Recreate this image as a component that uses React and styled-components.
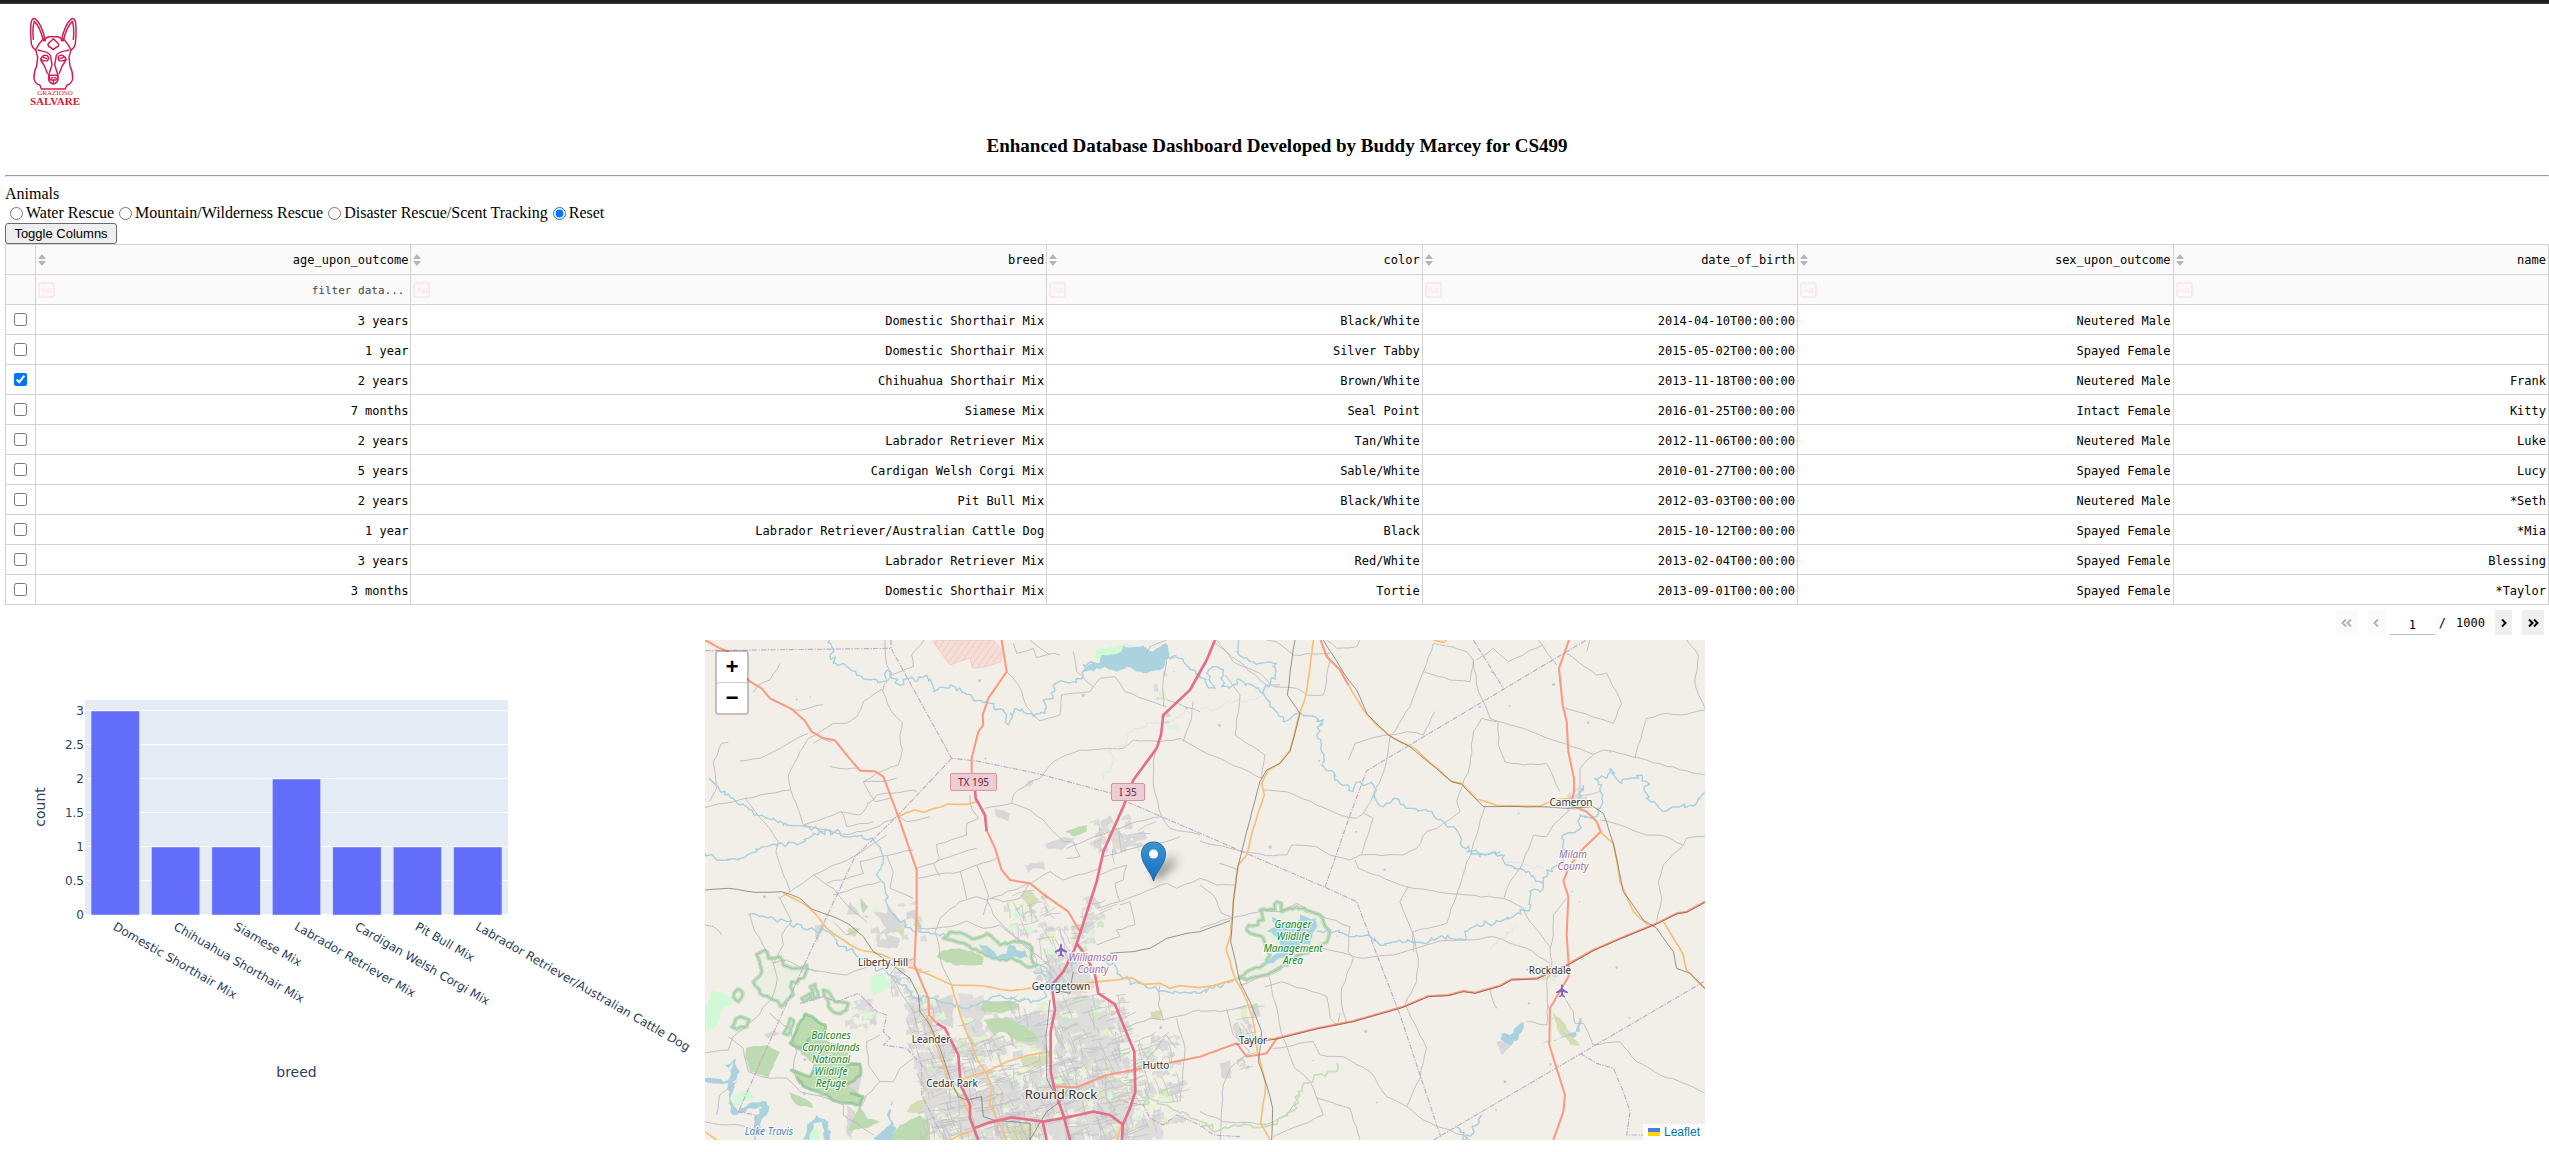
import React, { useState } from 'react';
import styled, { createGlobalStyle } from 'styled-components';

const GlobalStyle = createGlobalStyle`
  * { box-sizing: border-box; }
  body {
    margin: 0;
    background: #fff;
    color: #000;
    font-family: "Liberation Serif", "Times New Roman", serif;
    font-size: 16px;
  }
`;

const mono = '"DejaVu Sans Mono", Consolas, monospace';

const WindowEdge = styled.div`
  height: 4px;
  background: #1f1f1f;
  border-bottom: 1px solid #3a3a3a;
`;

const Page = styled.main`
  padding-left: 5px;
`;

const Brand = styled.header`
  padding: 6px 15px 0;
  svg { display: block; }
`;

const Title = styled.h1`
  margin: 25px 0 18px;
  font-size: 19px;
  line-height: 22px;
  text-align: center;
`;

const Rule = styled.hr`
  margin: 0 0 8px;
`;

const Filters = styled.fieldset`
  margin: 0;
  padding: 0;
  border: 0;
`;

const FilterTitle = styled.legend`
  padding: 0;
  line-height: 18px;
`;

const Options = styled.div`
  display: flex;
  line-height: 20px;
`;

const Option = styled.label`
  display: flex;
  align-items: center;
  input { margin: 0 3px 0 5px; }
`;

const ToggleButton = styled.button`
  display: block;
  width: 112px;
  height: 21px;
  padding: 0;
  border: 1px solid #6b6b6b;
  border-radius: 3px;
  background: #efefef;
  color: #000;
  font: 13px "Liberation Sans", Arial, sans-serif;
`;

const Table = styled.table`
  width: 100%;
  table-layout: fixed;
  border-collapse: collapse;
  font-family: ${mono};
  font-size: 12px;
`;

const SelectCol = styled.col`
  width: 30px;
`;

const DataCol = styled.col`
  width: ${(p) => (p.$wide ? '25%' : 'auto')};
`;

const Cell = styled.td`
  height: 30px;
  padding: 2px 2px 0;
  border: 1px solid #d3d3d3;
  text-align: right;
  white-space: nowrap;
  overflow: hidden;
`;

const HeadCell = styled(Cell)`
  padding: 0 2px;
  background: #fafafa;
  font-weight: 400;
`;

const SelectCell = styled(Cell)`
  padding: 0;
  text-align: center;
  input { display: block; margin: 0 auto; }
`;

const HeadContent = styled.div`
  display: flex;
  align-items: center;
  justify-content: space-between;
`;

const SortButton = styled.button`
  display: flex;
  padding: 0;
  border: 0;
  background: none;
`;

const FilterContent = styled.div`
  display: flex;
  align-items: center;
  gap: 4px;
`;

const CaseButton = styled.button`
  flex: none;
  width: 17px;
  height: 16px;
  padding: 0;
  border: 2px solid #fde8ee;
  border-radius: 3px;
  background: none;
  color: #fde4ec;
  font: 9px/12px "Liberation Sans", Arial, sans-serif;
`;

const FilterInput = styled.input`
  flex: 1;
  min-width: 0;
  height: 20px;
  padding: 2px 4px 0 0;
  border: 0;
  background: none;
  text-align: right;
  font: 11px ${mono};
  &::placeholder { color: #444; opacity: 1; }
`;

const Pager = styled.nav`
  display: flex;
  justify-content: flex-end;
  height: 35px;
  padding: 5px 5px;
  font-family: ${mono};
  font-size: 12px;
  line-height: 27px;
`;

const PageButton = styled.button`
  display: flex;
  align-items: center;
  justify-content: center;
  width: ${(p) => (p.$double ? 22 : 17)}px;
  height: 25px;
  margin-left: 10px;
  padding: 0;
  border: 0;
  background: #efefef;
  color: #000;
  &:disabled { background: #fafafa; color: #b5b5b5; }
`;

const PageInput = styled.input`
  width: 45px;
  height: 25px;
  margin: 0 4px 0 5px;
  padding: 5px 0 0;
  border: 0;
  border-bottom: 1px solid #bbb;
  background: none;
  text-align: center;
  font: 12px ${mono};
`;

const PageTotal = styled.span`
  margin-left: 10px;
`;

const Panels = styled.div`
  display: flex;
  align-items: flex-start;
`;

const ChartPanel = styled.section`
  flex: 0 0 700px;
  svg { display: block; overflow: visible; }
`;

const MapPanel = styled.section`
  position: relative;
  flex: 0 0 1000px;
  background: #f2efe9;
  > svg { display: block; width: 100%; height: auto; }
`;

const ZoomControl = styled.div`
  position: absolute;
  top: 10px;
  left: 10px;
  display: grid;
  border: 2px solid rgba(0, 0, 0, 0.2);
  border-radius: 4px;
  background-clip: padding-box;
`;

const ZoomButton = styled.button`
  width: 30px;
  height: 30px;
  padding: 3px 0 0;
  border: 0;
  border-radius: 2px;
  background: #fff;
  color: #000;
  font: bold 22px/27px "Liberation Mono", monospace;
  & + & { box-shadow: 0 -1px #ccc; margin-top: 1px; }
`;

const Attribution = styled.div`
  position: absolute;
  right: 0;
  bottom: 0;
  display: flex;
  align-items: center;
  gap: 4px;
  height: 16px;
  padding: 0 5px;
  background: rgba(255, 255, 255, 0.8);
  a {
    color: #0078a8;
    text-decoration: none;
    font: 12px/16px "Liberation Sans", Arial, sans-serif;
  }
`;

/* ---------- logo ---------- */

function Logo() {
  return (
    <svg width="70" height="100" viewBox="0 0 70 100" role="img" aria-label="Grazioso Salvare">
      <g transform="scale(.33333)" fill="none" stroke="#cf1f55" strokeWidth="4.4" strokeLinejoin="round" strokeLinecap="round">
        <path d="M76 92C71 68 60 38 45 26C36 24 32 32 32 60C31 80 34 92 34 102C38 116 44 118 47 121" />
        <path d="M124 92C129 68 140 38 155 26C164 24 168 32 168 60C169 80 166 92 166 102C162 116 156 118 153 121" />
        <path d="M70 92C64 66 54 44 43 34C38 50 38 70 40 88M130 92C136 66 146 44 157 34C162 50 162 70 160 88" />
        <path d="M72 92Q76 82 88 80H112Q124 82 128 92" />
        <path d="M70 86Q56 100 47 119L53 142L50 168Q41 186 42 206Q45 222 60 226L64 237H136L140 226Q155 222 158 206Q159 186 150 168L147 142L153 119Q144 100 130 86" />
        <path d="M100 86L116 102Q116 112 108 112L100 119L92 112Q84 112 84 102Z" />
        <path d="M54 120C62 124 82 122 91 136L96 164L86 196V210Q90 220 100 222Q110 220 114 210V196L104 164L109 136C118 122 138 124 146 120" />
        <path d="M62 148Q68 132 82 137Q89 144 82 152Q72 154 64 150M138 148Q132 132 118 137Q111 144 118 152Q128 154 136 150" />
        <path d="M62 150Q76 168 82 190M138 150Q124 168 118 190M70 142L80 146M130 142L120 146" />
        <path d="M87 196H113Q114 206 107 210H93Q86 206 87 196ZM94 203H97M103 203H106M100 209V220" />
      </g>
      <g fill="#d0202b" textAnchor="middle" fontFamily='"Liberation Serif", serif'>
        <text x="35" y="85" fontSize="7">GRAZIOSO</text>
        <text x="35" y="95" fontSize="11" fontWeight="700">SALVARE</text>
      </g>
    </svg>
  );
}

/* ---------- small icons ---------- */

function SortIcon() {
  return (
    <svg width="8" height="12" viewBox="0 0 8 12" aria-hidden="true">
      <path d="M4 0L8 5H0ZM4 12L0 7H8Z" fill="#b5b5b5" />
    </svg>
  );
}

function Chevron({ left, double }) {
  return (
    <svg width={double ? 11 : 6} height="10" viewBox={double ? '0 0 11 10' : '0 0 6 10'} aria-hidden="true">
      <g
        transform={left ? `translate(${double ? 11 : 6} 0) scale(-1 1)` : undefined}
        fill="none"
        stroke="currentColor"
        strokeWidth="2"
      >
        <path d="M1 1.5L4.5 5L1 8.5" />
        {double && <path d="M6 1.5L9.5 5L6 8.5" />}
      </g>
    </svg>
  );
}

/* ---------- bar chart ---------- */

const breeds = [
  ['Domestic Shorthair Mix', 3],
  ['Chihuahua Shorthair Mix', 1],
  ['Siamese Mix', 1],
  ['Labrador Retriever Mix', 2],
  ['Cardigan Welsh Corgi Mix', 1],
  ['Pit Bull Mix', 1],
  ['Labrador Retriever/Australian Cattle Dog', 1],
];

function BreedChart() {
  const left = 80;
  const top = 60;
  const width = 423;
  const bottom = 275;
  const unit = 68;
  const slot = width / breeds.length;
  return (
    <svg width="700" height="450" viewBox="0 0 700 450" role="img" aria-label="Count by breed"
      fontFamily='"DejaVu Sans", Verdana, sans-serif' fontSize="12" fill="#2a3f5f">
      <rect x={left} y={top} width={width} height={bottom - top} fill="#e5ecf6" />
      {[0, 0.5, 1, 1.5, 2, 2.5, 3].map((v) => (
        <g key={v}>
          <rect x={left} y={bottom - v * unit - 1} width={width} height="1" fill="#fff" />
          <text x={left - 1} y={bottom - v * unit + 4} textAnchor="end">{v}</text>
        </g>
      ))}
      {breeds.map(([name, count], i) => {
        const mid = left + slot * (i + 0.5);
        return (
          <g key={name}>
            <rect x={mid - slot * 0.4} y={bottom - count * unit} width={slot * 0.8} height={count * unit}
              fill="#636efa" stroke="#e5ecf6" strokeWidth="0.5" />
            <text transform={`translate(${mid - 3} 289) rotate(30)`}>{name}</text>
          </g>
        );
      })}
      <text x={left + width / 2} y="437" fontSize="14" textAnchor="middle">breed</text>
      <text transform="translate(40 167) rotate(-90)" fontSize="14" textAnchor="middle">count</text>
    </svg>
  );
}

/* ---------- map ---------- */

function random(seed) {
  let s = seed;
  return () => {
    s = (s * 16807) % 2147483647;
    return s / 2147483647;
  };
}

// Turns a coarse list of points into a path with natural looking bends.
function meander(points, amount, step, seed) {
  const next = random(seed * 7919 + 13);
  const list = points.split(' ').map((p) => p.split(',').map(Number));
  let d = `M${list[0]}`;
  for (let i = 1; i < list.length; i += 1) {
    const [ax, ay] = list[i - 1];
    const [bx, by] = list[i];
    const n = Math.max(1, Math.round(Math.hypot(bx - ax, by - ay) / step));
    for (let k = 1; k <= n; k += 1) {
      const t = k / n;
      const jx = k === n ? 0 : (next() - 0.5) * amount;
      const jy = k === n ? 0 : (next() - 0.5) * amount;
      d += `L${(ax + (bx - ax) * t + jx).toFixed(1)},${(ay + (by - ay) * t + jy).toFixed(1)}`;
    }
  }
  return d;
}

const minorRoads = [
  '15,518 75,505 135,490 272,465 265,420 300,350 325,310 400,265 440,265 470,245 490,200 545,163 575,230 607,262 600,300 607,345 595,390 530,415 490,440 525,500 570,490',
  '555,15 560,90 575,120 552,150 548,170', '575,120 640,95 635,60 672,15', '160,172 175,150 210,135 240,85', '278,225 320,222 370,208',
  '120,378 180,370 240,340 300,305 325,295', '340,325 365,310 395,322', '390,395 420,400 475,400', '28,500 50,460 40,380 65,325 85,322',
  '135,490 165,530 200,570 235,620 228,650 250,720 270,770 235,790',
  '272,465 310,570 360,555 420,530 480,540 530,480', '310,570 400,592 450,598 520,580 590,545', '425,530 440,575 520,560', '595,543 620,560 690,545',
  '490,440 560,438 590,430', '530,480 640,465 650,470', '270,770 340,720 460,665 500,640 560,600', '340,720 400,760 440,810 500,860',
  '380,745 490,715 480,680 570,660 640,645', '400,780 460,760 540,740', '240,790 275,860 245,900 250,930 220,985', '150,840 165,890 200,950 220,985 232,1030 215,1090 165,1150 100,1205 85,1245 15,1253',
  '560,660 580,710 570,760 640,790', '650,700 700,685 750,665 830,640', '700,685 720,725', '655,730 700,720 780,710 800,790',
  '780,710 890,670', '830,690 865,780 850,840', '705,890 720,850 780,800 830,785 860,795 990,745', '705,890 730,1000 755,1050',
  '655,880 705,880 770,870 800,858 850,880 900,870 960,920 1010,960 1060,1010', '860,795 880,840 940,900 1000,950', '875,790 910,800 960,790 985,750 1030,720 1050,710 1090,735 1200,700',
  '810,480 815,520 835,550 800,565 800,600 710,628 718,670 705,685', '855,520 935,505 990,525 1030,555 1060,590 1090,620',
  '935,505 940,480 990,440 1020,430 1060,380 1140,345 1230,340 1270,340 1300,315 1380,320 1440,310 1500,345',
  '1090,620 1120,620 1140,665 1100,670', '1100,640 1200,600 1310,560 1385,545 1360,450 1360,380 1375,320', '1385,545 1410,580 1500,600', '1210,665 1300,640 1400,620 1440,605',
  '1200,720 1280,690 1270,735 1245,745 1260,800 1400,745 1430,760 1500,730', '1260,810 1290,800 1305,870 1250,885 1260,905 1190,930', '1190,820 1260,800',
  '920,110 955,150 980,215 1020,258 1080,240 1085,180 1170,170 1200,130 1245,125 1275,170 1400,215', '1120,50 1130,110 1180,155', '1390,215 1390,130 1400,70 1430,60', '1340,55 1350,35 1400,15', '940,25 950,55 1000,40 1010,68 1060,55 1080,60', '990,15 1050,60', '1400,195 1500,230', '1450,320 1475,250 1480,200',
  '350,1010 320,1000 345,1007 440,1020 490,1000 540,980', '220,985 260,975 320,1005', '210,1135 250,1170 270,1180', '85,1205 130,1240 145,1310 210,1330 260,1330 300,1370 380,1390 430,1410 430,1440 520,1500',
  '270,1180 290,1250 280,1300 300,1350', '540,1200 500,1220 505,1290 540,1340 580,1340 600,1300 640,1270', '540,1340 500,1380 480,1420', '15,1460 80,1470 120,1470 180,1490', '50,1440 60,1380 110,1340', '600,1070 570,1020 590,990 640,970', '600,1070 640,1130 650,1180', '480,880 440,900 400,860',
  '15,870 40,875 65,900', '1270,1180 1350,1150 1390,1155 1500,1125', '1380,1050 1375,1110 1390,1155', '1300,1300 1330,1290 1400,1200 1430,1240', '1430,1150 1455,1240 1450,1290 1440,1400',
  '1550,15 1600,80 1680,115 1720,155 1790,160 1820,180 1870,180 1890,80 1880,55', '1575,120 1620,180 1605,300 1695,360 1685,430', '1500,345 1580,380 1685,430', '1690,465 1760,470 1850,510 1920,540 1970,550 1990,535 2020,550 1985,658',
  '1500,618 1590,640 1700,662 1760,660 1775,630 1850,635 1890,660 1950,675 1980,660 2110,660 2150,640 2180,590 2210,580 2280,530 2270,500 2310,390 2320,290 2345,250 2390,260',
  '1965,675 1975,700 2120,755 2210,770 2300,780 2410,790 2470,820 2490,860 2550,935 2555,1000 2540,1040 2545,1120', '2070,305 2055,400 2020,480 1990,535', '2075,300 2130,215 2170,110 2200,25 2255,35 2300,50 2320,75 2330,150 2370,250 2450,275 2680,358 2710,345 2760,355 2840,375 2980,415 3015,420', '2170,110 2250,135 2310,140 2320,75', '2330,75 2380,40 2425,80 2530,30', '2515,15 2570,90', '2600,55 2690,120 2720,115 2765,205 2740,265 2595,218',
  '2960,15 2995,60 2985,150 3015,220', '2805,370 2840,250 2900,235 2960,238 3015,225', '2395,260 2395,330 2415,380 2470,390 2540,385 2580,470', '2680,360 2640,400 2640,460', '2355,515 2330,600 2240,865 2140,890 2140,950', '2610,525 2560,570 2540,605 2500,600 2460,700 2430,740 2412,790',
  '2700,555 2760,570 2840,600 2900,605 2950,630 2960,610 3015,605', '2950,630 2890,690 2875,740 2885,790 2870,860', '2600,790 2560,840 2560,900 2550,940', '2125,755 2100,800 2120,850 2140,900 2155,970 2150,1040 2115,1110 2180,1240 2160,1330 2120,1415', '1870,940 1990,970 2080,960 2150,940 2210,920 2300,915 2380,905 2430,925 2480,940 2550,985',
  '1500,880 1590,850 1690,825 1740,830 1790,805 1860,840 1950,875 1945,950 1960,970 1925,1060 1925,1110 1940,1160', '1620,1050 1700,1020 1790,960 1870,940', '1695,1055 1745,1040 1880,1085 1890,1150 1910,1170', '1705,1020 1750,1210 1785,1300 1830,1340 1850,1390 1950,1420 1980,1515', '1720,1240 1840,1220 1860,1260 1930,1265 2010,1310 2060,1385 2120,1415 2170,1455 2230,1480 2290,1500 2310,1515',
  '2545,1110 2540,1170 2480,1160', '2580,1060 2620,1130 2625,1165 2650,1165 2680,1230 2760,1220 2810,1280 2880,1320 2940,1340 3015,1375', '2370,1065 2390,1120', '1500,1128 1560,1130 1650,1110', '1580,1120 1600,1200 1650,1250 1590,1300 1570,1350 1560,1515', '1500,1430 1570,1460 1700,1468 1760,1440 1800,1380', '1720,1505 1870,1440 1850,1385', '1500,730 1550,750 1605,750', '1500,750 1540,780 1565,835 1600,850', '1558,685 1615,705', '2670,15 2660,50', '1920,1135 1915,1160', '1945,375 1965,325 2060,300 2120,290 2170,300 2205,230',
  '1540,20 1580,50 1700,150 1740,150', '1700,15 1730,20 1780,60 1890,55', '1880,15 1910,40 1970,35 1980,15',
];

const rivers = [
  '390,15 400,85 440,95 470,120 550,140 562,105 600,150 635,125 650,140 680,120 700,170 750,150 800,178 845,200 870,205 920,240 925,270 945,220 1000,245 1035,235 1030,195 1060,190 1060,150 1120,140 1150,120 1150,90 1200,85',
  '28,432 75,480 120,510 160,535 220,550 250,570 300,572 360,590 420,592 470,605 520,610 540,640 545,690 530,720 555,760 560,805 590,850 640,890 740,905',
  '15,655 50,675 100,670 150,655 200,635 230,630 300,625 340,595 370,590',
  '145,840 210,845 260,860 320,885 380,890 410,925 460,950 510,990 570,1020 610,1050 640,1090 700,1090 740,1105 800,1120 860,1100 900,1080 960,1100 1020,1095 1060,1040 1100,1010 1130,985',
  '1000,985 1040,1000 1055,1030 1030,1050', '1000,1010 1040,1025', '1180,975 1240,985 1260,1020 1300,1045 1370,1060 1420,1075 1500,1075 1540,1060 1600,1040',
  '1400,60 1450,80 1500,120 1520,150 1545,160 1520,115 1540,95 1570,105 1565,155 1600,150 1610,135 1670,160 1690,175 1725,120 1728,85 1650,80 1610,50 1615,15',
  '1690,175 1710,215 1750,260 1800,232 1870,255 1850,300 1865,350 1865,390 1900,410 1905,435 1960,470 1980,440 2020,450 2030,500 2050,515 2080,490 2130,520 2180,525 2220,555 2270,585 2280,625 2330,650 2400,660 2420,690 2470,705 2520,740 2530,745 2540,705 2590,690 2585,610 2640,580 2640,540 2690,545 2700,520 2705,450 2685,430 2720,430 2730,400 2765,445 2825,420 2840,440 2840,490 2890,530 2940,515 2990,505 3015,470',
  '2300,650 2340,665 2400,650', '2530,745 2520,770 2490,770 2490,820 2440,845 2400,860 2330,870 2310,880 2295,915 2220,905 2180,925 2120,920 2040,930 2000,900 1940,900 1880,885 1850,890',
  '2270,1475 2300,1515 2330,1470 2345,1440', '2635,495 2650,450',
];

const faintStreams = ['1500,222 1540,225 1580,205 1640,200 1690,175', '1210,435 1240,380 1225,350 1270,335 1290,290 1340,265 1400,265 1440,240 1490,225', '2370,945 2400,910 2450,870', '2410,690 2450,680 2530,700'];

const rails = [
  '15,765 85,760 165,772 245,770 300,790 335,822 400,845 450,870 490,905 520,950 570,985 630,1030 655,1080 660,1130 690,1170 720,1240 750,1330 775,1385 800,1395 845,1385 850,1445 880,1455 990,1465 990,1515',
  '1785,15 1775,80 1762,180 1800,235 1770,350 1740,385 1700,405 1680,440 1640,590 1615,690 1600,800 1592,920 1620,1040 1650,1100 1685,1190 1675,1280 1700,1350 1718,1420 1715,1515',
  '1870,15 1935,120 1970,165 2000,235 2065,300 2130,335 2255,440 2285,448 2350,515 2510,515 2600,520 2680,515 2710,535 2740,625 2770,770 2830,855 2870,880 2920,950 2930,1000 2970,1015 3015,1062',
  '1230,955 1300,950 1350,940 1400,910 1460,895 1500,890 1590,857', '1050,1060 1110,1075 1120,1010', '1050,1095 1038,1200 1040,1330 1060,1370', '990,1515 1040,1430 1080,1400 1100,1370',
];

const orangeRoads = [
  '250,775 310,805 345,835 380,880 430,915 480,945 550,960 600,985 690,1020 755,1050 850,1053 930,1067 1000,1058 1190,1040 1250,1035 1295,1028 1330,1048 1380,1045 1410,1060 1440,1052 1500,1058 1540,1052 1605,1033',
  '595,545 645,525 672,532 745,507 800,508 830,500', '755,1050 780,1140 830,1270 860,1315 875,1360 870,1410 900,1470 920,1515', '780,1335 860,1310 920,1280 980,1262 1050,1250', '680,1140 700,1200 720,1260 745,1340 790,1400 810,1440', '750,1515 790,1495 830,1485', '15,1490 50,1515', '1250,1515 1265,1470',
  '1840,15 1820,170 1795,250 1770,345 1740,385 1705,405 1685,445 1693,480 1660,580 1640,660 1615,690 1600,800 1592,900 1578,945 1605,1030 1640,1095 1662,1170 1672,1250 1697,1350 1682,1465 1710,1515',
  '1930,125 1990,225 2030,270 2080,310 2150,345 2255,440 2285,445 2330,492 2395,513 2520,514 2560,495 2610,490', '2700,590 2740,625 2760,740 2800,830 2845,870', '2890,860 2950,960 2960,1005 3015,1060', '2200,15 2230,22 2240,15', '1700,1212 1735,1210',
];

const trunkRoads = [
  '15,15 60,40 85,50 110,100 150,140 185,160 210,190 275,222 315,258 335,290 370,310 405,316 440,360 480,407 525,409 550,425 595,545 650,705 650,840 643,990 685,1090 687,1140 710,1165',
  '905,15 920,110 865,190 848,240 850,270 835,290 815,370 815,415', '862,590 885,640 905,705 930,735 990,745 1040,785 1105,830 1140,890',
  '1065,1355 1130,1357 1220,1320 1300,1305 1400,1285 1500,1265 1610,1225 1640,1265 1700,1255 1730,1210 1850,1180 1960,1158 2110,1115 2185,1083 2245,1080 2290,1068 2325,1073 2400,1052 2435,1033 2510,1030 2600,990 2680,945 2760,910 2870,865 2930,835 2960,830 3015,800',
  '1862,15 1880,65 1920,105 1945,150', '2607,15 2577,100 2588,210 2600,260 2605,350 2622,430 2622,470 2612,510 2660,530 2690,560 2702,590 2640,650 2605,700 2590,738 2605,785 2600,900 2608,1020 2550,1120 2548,1230 2595,1380 2590,1430 2560,1515',
];

const motorways = [
  '1545,15 1520,75 1470,165 1390,240 1383,300 1370,340 1300,435 1270,515 1210,650 1190,740 1145,880 1125,940 1090,1010 1055,1050 1065,1125 1052,1190 1052,1310 1065,1370 1090,1440 1110,1515',
  '825,465 827,490 855,540 860,590', '1130,925 1160,965 1185,1020 1195,1075 1245,1108 1270,1170 1303,1250 1306,1370 1290,1420 1268,1470 1266,1515',
  '710,1165 735,1180 775,1260 782,1350 810,1410 810,1450 835,1515', '825,1478 870,1462 935,1447 1030,1460 1100,1447 1180,1430 1230,1440 1268,1468', '1028,1460 1040,1515',
];

const boundaries = [
  '15,47 573,40 755,370 830,378 1010,415 1235,475 1280,500 1500,595 1875,757 1970,800 2100,1140 2222,1505', '573,15 573,40', '755,370 595,540 465,665 340,930 240,1150 115,1430', '165,1515 165,1440 115,1430',
  '1875,757 1950,540 2000,407 2600,50 2660,15', '2320,15 2410,160', '2200,1515 3015,1038', '300,1105 370,1085 410,1100 475,1075 530,1130 560,1140 550,1190 570,1210 550,1230 620,1240 665,1290 665,1380 720,1490', '2640,1255 2690,1285 2740,1300 2770,1370 2790,1430 2780,1500 2830,1500', '1270,1400 1330,1410 1350,1450 1390,1470 1430,1440 1500,1470 1540,1500 1620,1505',
];

const greens = [
  '315,1135 376,1170 370,1210 450,1245 440,1280 480,1285 482,1320 440,1350 490,1385 480,1410 410,1400 380,1380 310,1355 290,1325 270,1305 330,1325 345,1290 270,1225 300,1160',
  '140,1238 200,1230 240,1252 205,1330 150,1310 135,1270', '730,945 780,940 850,965 845,990 760,990 710,965', '850,1100 940,1100 960,1115 900,1135 840,1125', '850,1155 920,1145 1000,1190 1020,1220 960,1220 910,1190 880,1200',
  '560,1515 600,1470 660,1440 690,1465 690,1515', '265,1370 330,1400 340,1420 290,1410', '1095,590 1160,570 1160,590 1120,605', '440,1490 480,1410 500,1450 540,1460 500,1480', '480,790 505,815 490,835', '640,870 655,850 665,880',
];

const outlinedReserves = [
  '170,958 195,945 205,970 240,965 250,990 275,1000 320,990 315,1020 290,1045 275,1040 280,1080 245,1115 220,1095 180,1075 160,1040 185,1010',
  '100,1085 112,1063 128,1072 115,1100', '95,1175 120,1145 148,1155 140,1175 110,1183', '330,1055 345,1048 355,1085 340,1092', '370,1065 385,1070 405,1100 445,1105 440,1125 410,1135 385,1115', '250,1195 270,1150 280,1155 265,1200', '305,1090 330,1075 330,1090 312,1100',
  '1680,825 1725,825 1730,800 1745,805 1745,830 1790,815 1865,845 1885,885 1885,910 1850,940 1800,960 1740,1000 1700,1020 1640,1035 1615,1030 1640,1010 1690,990 1710,960 1690,910 1650,895 1640,880 1690,855',
  '730,910 750,890 830,910 860,895 900,930 950,920 990,930 995,960 1000,985 1010,990 980,995 960,980 930,970 900,975 870,965 800,930 750,915',
];

const reserveEdges = [
  '315,1135 376,1170 370,1210 345,1200 300,1240 270,1225 300,1160 315,1135', '270,1305 330,1325 345,1290', '290,1325 310,1355 380,1380 410,1400 480,1410 490,1385 450,1375', '440,1290 480,1288 482,1320 440,1350',
];

const waters = [
  '1150,110 1165,90 1200,85 1205,60 1255,55 1270,30 1340,38 1360,50 1400,25 1405,70 1390,100 1330,115 1280,95 1250,110 1215,95 1180,110',
  '1715,845 1750,865 1790,870 1800,840 1850,850 1852,870 1830,930 1790,935 1770,960 1720,985 1680,988 1735,950 1740,910 1700,890 1735,875', '2395,1190 2430,1200 2450,1175 2470,1160 2465,1190 2435,1230 2410,1220',
  '835,925 870,940 890,965 920,955 930,930 950,945 975,945 985,970 950,965 910,970 870,965', '15,1330 85,1335 100,1280 85,1300 75,1290 105,1270 112,1300 120,1310 100,1340 95,1400 115,1430 150,1405 200,1400 205,1430 180,1470 190,1500 165,1490 165,1440 190,1420 150,1420 110,1440 90,1430 85,1345 15,1340',
  '310,1515 320,1470 350,1440 385,1460 390,1515 375,1515 365,1460 340,1465 330,1515', '520,1510 570,1470 560,1440 580,1395 570,1440 590,1480 570,1515', '2635,1150 2645,1150 2640,1190 2520,1228 2630,1200',
];

const greys = [
  '885,520 930,535 925,560 885,540', '1035,630 1090,605 1125,610 1085,645 1040,640', '975,690 1030,680 1035,705 1000,700 985,715', '450,800 480,840 440,840', '520,830 560,835 565,810 600,855 625,870 560,900 600,910 590,940 530,935 530,900 560,880', '345,870 375,865 360,900 350,925', '1230,600 1330,600 1330,630 1240,640', '700,1100 760,1080 760,1180 700,1160',
  '440,1310 485,1320 470,1400 440,1380', '440,1410 465,1430 455,1510 440,1500', '920,1150 1040,1135 1035,1250 960,1220', '1560,1285 1590,1275 1595,1330 1565,1330', '1600,1165 1640,1160 1640,1210 1610,1210', '2390,1220 2420,1220 2435,1230 2405,1260', '190,1200 220,1185 240,1195 205,1210', '2640,465 2650,490 2610,490', '975,450 1000,435 990,455', '1200,560 1230,540 1245,570 1210,580',
];

const builtUp = [
  '640,1270 700,1230 760,1290 830,1300 880,1330 960,1320 1050,1300 1180,1320 1260,1330 1290,1400 1300,1450 1390,1440 1380,1515 700,1515 680,1430',
  '610,1110 670,1100 690,1170 740,1200 770,1290 700,1290 650,1230', '1060,1100 1180,1080 1220,1130 1260,1230 1280,1310 1070,1320', '1040,950 1110,960 1170,1010 1180,1060 1060,1080 1030,1020', '770,1080 850,1080 840,1160 880,1250 830,1260 790,1180',
];

const mints = ['40,1065 95,1085 95,1105 70,1120 50,1170 15,1195 15,1110', '510,1030 545,1015 575,1050 540,1075 525,1080', '885,1225 905,1215 920,1235 900,1260', '810,1120 840,1115 835,1150 815,1145', '1190,45 1280,25 1310,30 1260,55 1240,80 1190,75', '100,1380 140,1365 165,1385 130,1400 100,1420', '1145,910 1165,905 1168,930', '1700,905 1740,900 1735,930', '320,1490 350,1475 360,1515 320,1515'];

const khakis = ['1350,1130 1385,1128 1380,1155 1350,1150', '445,880 475,880 465,905 445,900', '960,780 990,765 1020,800 990,820', '630,1410 680,1385 670,1430 620,1430', '960,1270 1050,1255 1045,1290 970,1300', '2560,1130 2600,1180 2640,1230 2610,1230 2570,1180', '920,1475 1000,1470 990,1515 930,1515', '580,890 620,875 610,905'];

// x, y, width, height, amount of patches, amount of streets
const towns = [
  [650, 1200, 250, 315, 210, 150], [610, 1080, 100, 160, 40, 24], [880, 1290, 420, 225, 300, 210], [1060, 1080, 210, 230, 130, 80], [1000, 870, 150, 160, 46, 34],
  [910, 780, 130, 110, 34, 20], [1290, 1200, 140, 270, 90, 32], [770, 1100, 270, 170, 70, 26], [1140, 790, 60, 120, 18, 5],
  [1170, 530, 150, 120, 30, 10], [1595, 1110, 65, 110, 18, 10], [570, 970, 80, 100, 14, 4], [430, 790, 240, 120, 16, 0],
  [430, 1090, 80, 90, 26, 0], [2600, 460, 45, 50, 6, 6], [2500, 995, 60, 35, 5, 4], [1590, 1270, 50, 40, 5, 2], [1350, 60, 60, 220, 8, 0],
];

const patchColors = [
  '#dadada', '#dadada', '#dadada', '#d8d8d8', '#dcdcdc', '#dcdcdc', '#d6d6d8', '#dcdcdc', '#d9d9d9', '#e3f0cd',
  '#d3e8c6', '#f1f2dc', '#f0eee6', '#f0eee6', '#dbf5d8', '#e2dfd0',
];

function buildTowns() {
  const next = random(4711);
  const patches = [];
  const streets = [];
  towns.forEach(([x, y, w, h, p, s]) => {
    for (let i = 0; i < p; i += 1) {
      const cx = x + next() * w;
      const cy = y + next() * h;
      const a = 8 + next() * 20;
      const b = 6 + next() * 18;
      const k = 4 + next() * 6;
      patches.push({
        d: `M${cx.toFixed(0)},${cy.toFixed(0)}l${a.toFixed(0)},${(-k).toFixed(0)}l${k.toFixed(0)},${b.toFixed(0)}l${(-a * 0.5).toFixed(0)},${(k * 0.6).toFixed(0)}l${(-k).toFixed(0)},-4l${(-a * 0.5).toFixed(0)},5z`,
        fill: patchColors[Math.floor(next() * patchColors.length)],
      });
    }
    let d = '';
    for (let i = 0; i < s; i += 1) {
      const cx = x + next() * w;
      const cy = y + next() * h;
      const l = 22 + next() * 50;
      const turn = (next() > 0.5 ? -0.3 : 1.25) + (next() - 0.5) * 0.5;
      const dx = Math.cos(turn) * l;
      const dy = Math.sin(turn) * l;
      d += `M${cx.toFixed(0)},${cy.toFixed(0)}q${(dx * 0.5 + (next() - 0.5) * 16).toFixed(0)},${(dy * 0.5 + (next() - 0.5) * 16).toFixed(0)} ${dx.toFixed(0)},${dy.toFixed(0)}`;
    }
    streets.push(d);
  });
  const ponds = [];
  for (let i = 0; i < 46; i += 1) {
    ponds.push([100 + next() * 2850, 100 + next() * 1380, 2 + next() * 3]);
  }
  return { patches, streets, ponds };
}

const townShapes = buildTowns();

const placeLabels = [
  ['Liberty Hill', 549, 993], ['Georgetown', 1084, 1064], ['Leander', 692, 1225], ['Cedar Park', 756, 1356], ['Hutto', 1369, 1302],
  ['Taylor', 1659, 1227], ['Cameron', 2614, 514], ['Rockdale', 2551, 1018], ['Round Rock', 1082, 1392, 13],
];

const areaLabels = [
  { color: '#168a26', x: 393, y: 1213, lines: ['Balcones', 'Canyonlands', 'National', 'Wildlife', 'Refuge'] },
  { color: '#168a26', x: 1779, y: 880, lines: ['Granger', 'Wildlife', 'Management', 'Area'] },
  { color: '#a070a3', x: 1179, y: 977, lines: ['Williamson', 'County'] },
  { color: '#a070a3', x: 2618, y: 670, lines: ['Milam', 'County'] },
  { color: '#5285bd', x: 208, y: 1500, lines: ['Lake Travis'] },
];

const px = (v) => Math.round(v / 3 - 5);

function Lines({ data, amount = 0, step = 16, ...rest }) {
  return (
    <g fill="none" strokeLinejoin="round" {...rest}>
      {data.map((p, i) => <path key={p} d={meander(p, amount, step, i + 1)} />)}
    </g>
  );
}

function Areas({ data, amount = 10, ...rest }) {
  return (
    <g {...rest}>
      {data.map((p, i) => <path key={p} d={`${meander(`${p} ${p.split(' ')[0]}`, amount, 12, i + 3)}Z`} />)}
    </g>
  );
}

function Plane({ x, y }) {
  return (
    <path
      transform={`translate(${x} ${y})`}
      fill="#8461c4"
      d="M0-18c2 0 3 3 3 6v7l15 10v4l-15-4v8l6 5v3l-9-3-9 3v-3l6-5v-8l-15 4v-4l15-10v-7c0-3 1-6 3-6z"
    />
  );
}

function Shield({ x, y, width, children }) {
  return (
    <g>
      <rect x={x} y={y} width={width} height="17" rx="1.5" fill="#edccd3" stroke="#d893a4" />
      <text x={x + width / 2} y={y + 12} textAnchor="middle" fill="#6e2242">{children}</text>
    </g>
  );
}

function RegionMap() {
  return (
    <svg viewBox="0 0 1000 500" role="img" aria-label="Map of central Texas" fontFamily='"Noto Sans", sans-serif' fontSize="10">
      <defs>
        <linearGradient id="pin" x1="0" y1="0" x2="0" y2="1">
          <stop offset="0" stopColor="#3f94d0" />
          <stop offset="1" stopColor="#126fc6" />
        </linearGradient>
        <linearGradient id="shade" x1="0" y1="1" x2="1" y2="0">
          <stop offset="0" stopColor="#000" stopOpacity=".6" />
          <stop offset="1" stopColor="#000" stopOpacity="0.05" />
        </linearGradient>
        <filter id="soft" x="-50%" y="-50%" width="200%" height="200%">
          <feGaussianBlur stdDeviation="4" />
        </filter>
        <pattern id="hatch" width="16" height="16" patternUnits="userSpaceOnUse" patternTransform="rotate(35)">
          <rect width="16" height="16" fill="#f3dfd8" />
          <path d="M1 0V16" stroke="#f3bdb5" strokeWidth="2" />
        </pattern>
      </defs>
      <g transform="translate(-5 -5) scale(.333333)">
        <path d="M700 20L715 15H880L905 45L903 80L860 95L818 100L810 68L750 90Z" fill="url(#hatch)" stroke="#f3bdb5" strokeWidth="2" />
        <Areas data={mints} fill="#d2f9d6" />
        <Areas data={builtUp} fill="#dedddb" amount={22} />
        <Areas data={greys} fill="#d8d8d8" amount={6} />
        <g>{townShapes.patches.map((s) => <path key={s.d} d={s.d} fill={s.fill} />)}</g>
        <Areas data={greens} fill="#bddab1" amount={6} />
        <Areas data={khakis} fill="#d5ddb8" />
        <Areas data={outlinedReserves} fill="#e6ecdb" fillOpacity=".6" stroke="#8fc795" strokeWidth="12" strokeOpacity=".5" strokeLinejoin="round" />
        <Areas data={outlinedReserves} fill="none" amount={10} stroke="#83bd8b" strokeWidth="3" strokeOpacity=".6" />
        <Lines data={reserveEdges} amount={6} step={12} stroke="#7dbd85" strokeWidth="9" strokeOpacity=".6" />
        <Areas data={waters} fill="#aad3df" amount={12} />
        <g fill="#aad3df">{townShapes.ponds.map(([x, y, r]) => <circle key={x} cx={x} cy={y} r={r} />)}</g>
        <g fill="none" stroke="#c3c2c4" strokeWidth="2.400">{townShapes.streets.map((d) => <path key={d} d={d} />)}</g>
        <Lines data={minorRoads} amount={5} step={22} stroke="#bdbcbf" strokeWidth="2.8" />
        <Lines data={faintStreams} amount={14} step={10} stroke="#cfe2e5" strokeWidth="2" />
        <Lines data={rivers} amount={17} step={10} stroke="#a6d1df" strokeWidth="4.2" />
        <Lines data={['1500,1475 1560,1485 1640,1470 1700,1475 1750,1445 1790,1420 1795,1370 1850,1320 1905,1310 1910,1285', '1230,1330 1290,1350 1330,1390 1400,1410 1460,1440 1540,1480']} amount={16} step={10} stroke="#c2dfb5" strokeWidth="5" />
        <Lines data={boundaries} stroke="#c4abc8" strokeWidth="3.4" strokeDasharray="16 4 4 4" />
        <Lines data={orangeRoads} amount={3} stroke="#f7c076" strokeWidth="5" step={30} />
        <Lines data={trunkRoads} stroke="#fa9a80" strokeWidth="6.2" />
        <Lines data={rails} amount={2} step={30} stroke="#6b6762" strokeOpacity=".8" strokeWidth="2.6" />
        <Lines data={['1610,1228 1730,1212 1850,1182 1960,1160 2110,1117 2185,1085 2245,1082 2290,1070 2325,1075 2400,1054 2435,1035 2510,1032 2600,992 2680,947 2760,912 2870,867 2930,837 2960,832 3015,802']} stroke="#8d5a4e" strokeWidth="2.4" />
        <Lines data={motorways} stroke="#e56e8b" strokeWidth="8" />
        <Plane x={1083} y={944} />
        <Plane x={2586} y={1066} />
      </g>
      <Shield x={245.5} y={133.5} width={46}>TX 195</Shield>
      <Shield x={406.5} y={143.5} width={33}>I 35</Shield>
      <g textAnchor="middle" stroke="#fff" strokeOpacity=".75" strokeWidth="2.5" strokeLinejoin="round" paintOrder="stroke">
        {placeLabels.map(([name, x, y, size]) => (
          <text key={name} x={px(x)} y={px(y)} fontSize={size || 10} fill="#333">{name}</text>
        ))}
        {areaLabels.map((label) => (
          <g key={label.lines.join()} fill={label.color} fontStyle="italic">
            {label.lines.map((line, i) => (
              <text key={line} x={px(label.x)} y={px(label.y) + i * 12}>{line}</text>
            ))}
          </g>
        ))}
      </g>
      <path d="M449 241C449 232 456 218 467 215C477 214 476 222 468 229Z" fill="url(#shade)" filter="url(#soft)" />
      <path
        d="M448.500 241C446 232 436.500 224 436.500 214C436.500 206.500 442 202 448.500 202S460.500 206.500 460.500 214C460.500 224 451 232 448.500 241Z"
        fill="url(#pin)" stroke="#2e6c97"
      />
      <circle cx="448.500" cy="214" r="4.500" fill="#fff" />
    </svg>
  );
}

/* ---------- page ---------- */

const columns = ['age_upon_outcome', 'breed', 'color', 'date_of_birth', 'sex_upon_outcome', 'name'];

const rows = [
  ['3 years', 'Domestic Shorthair Mix', 'Black/White', '2014-04-10T00:00:00', 'Neutered Male', ''],
  ['1 year', 'Domestic Shorthair Mix', 'Silver Tabby', '2015-05-02T00:00:00', 'Spayed Female', ''],
  ['2 years', 'Chihuahua Shorthair Mix', 'Brown/White', '2013-11-18T00:00:00', 'Neutered Male', 'Frank'],
  ['7 months', 'Siamese Mix', 'Seal Point', '2016-01-25T00:00:00', 'Intact Female', 'Kitty'],
  ['2 years', 'Labrador Retriever Mix', 'Tan/White', '2012-11-06T00:00:00', 'Neutered Male', 'Luke'],
  ['5 years', 'Cardigan Welsh Corgi Mix', 'Sable/White', '2010-01-27T00:00:00', 'Spayed Female', 'Lucy'],
  ['2 years', 'Pit Bull Mix', 'Black/White', '2012-03-03T00:00:00', 'Neutered Male', '*Seth'],
  ['1 year', 'Labrador Retriever/Australian Cattle Dog', 'Black', '2015-10-12T00:00:00', 'Spayed Female', '*Mia'],
  ['3 years', 'Labrador Retriever Mix', 'Red/White', '2013-02-04T00:00:00', 'Spayed Female', 'Blessing'],
  ['3 months', 'Domestic Shorthair Mix', 'Tortie', '2013-09-01T00:00:00', 'Spayed Female', '*Taylor'],
];

const rescueTypes = ['Water Rescue', 'Mountain/Wilderness Rescue', 'Disaster Rescue/Scent Tracking', 'Reset'];

export default function App() {
  const [rescue, setRescue] = useState('Reset');
  const [selected, setSelected] = useState([2]);
  const toggle = (i) => setSelected((s) => (s.includes(i) ? s.filter((n) => n !== i) : [...s, i]));

  return (
    <>
      <GlobalStyle />
      <WindowEdge />
      <Page>
        <Brand><Logo /></Brand>
        <Title>Enhanced Database Dashboard Developed by Buddy Marcey for CS499</Title>
        <Rule />
        <Filters>
          <FilterTitle>Animals</FilterTitle>
          <Options>
            {rescueTypes.map((type) => (
              <Option key={type}>
                <input type="radio" name="rescue" checked={rescue === type} onChange={() => setRescue(type)} />
                {type}
              </Option>
            ))}
          </Options>
        </Filters>
        <ToggleButton type="button">Toggle Columns</ToggleButton>
        <Table>
          <colgroup>
            <SelectCol />
            {columns.map((c) => <DataCol key={c} $wide={c === 'breed'} />)}
          </colgroup>
          <thead>
            <tr>
              <HeadCell as="th" />
              {columns.map((c) => (
                <HeadCell as="th" key={c} scope="col">
                  <HeadContent>
                    <SortButton type="button" aria-label={`Sort by ${c}`}><SortIcon /></SortButton>
                    {c}
                  </HeadContent>
                </HeadCell>
              ))}
            </tr>
            <tr>
              <HeadCell as="th" />
              {columns.map((c, i) => (
                <HeadCell as="th" key={c}>
                  <FilterContent>
                    <CaseButton type="button" aria-label={`Match case in ${c}`}>Aa</CaseButton>
                    <FilterInput aria-label={`Filter ${c}`} placeholder={i === 0 ? 'filter data...' : undefined} />
                  </FilterContent>
                </HeadCell>
              ))}
            </tr>
          </thead>
          <tbody>
            {rows.map((row, i) => (
              <tr key={row.join()}>
                <SelectCell>
                  <input type="checkbox" aria-label={`Select row ${i + 1}`} checked={selected.includes(i)} onChange={() => toggle(i)} />
                </SelectCell>
                {row.map((value, k) => <Cell key={columns[k]}>{value}</Cell>)}
              </tr>
            ))}
          </tbody>
        </Table>
        <Pager aria-label="Table pages">
          <PageButton type="button" $double disabled aria-label="First page"><Chevron left double /></PageButton>
          <PageButton type="button" disabled aria-label="Previous page"><Chevron left /></PageButton>
          <PageInput aria-label="Current page" defaultValue="1" />
          <span>/</span>
          <PageTotal>1000</PageTotal>
          <PageButton type="button" aria-label="Next page"><Chevron /></PageButton>
          <PageButton type="button" $double aria-label="Last page"><Chevron double /></PageButton>
        </Pager>
        <Panels>
          <ChartPanel><BreedChart /></ChartPanel>
          <MapPanel>
            <RegionMap />
            <ZoomControl>
              <ZoomButton type="button" aria-label="Zoom in">+</ZoomButton>
              <ZoomButton type="button" aria-label="Zoom out">−</ZoomButton>
            </ZoomControl>
            <Attribution>
              <svg width="12" height="8" viewBox="0 0 12 8" aria-hidden="true">
                <path fill="#4c7be1" d="M0 0h12v4H0z" />
                <path fill="#ffd500" d="M0 4h12v4H0z" />
              </svg>
              <a href="https://leafletjs.com">Leaflet</a>
            </Attribution>
          </MapPanel>
        </Panels>
      </Page>
    </>
  );
}
